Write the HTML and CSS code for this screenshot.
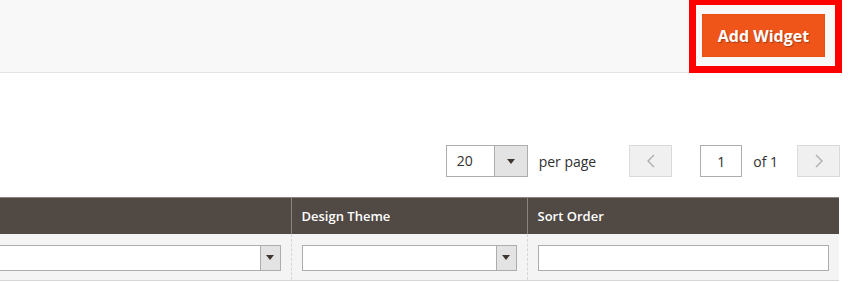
FILE: index.html
```html
<!DOCTYPE html>
<html lang="en">
<head>
  <meta charset="UTF-8">
  <title>Widgets</title>
  <link rel="stylesheet" href="styles.css">
</head>
<body>
  <!-- Page actions -->
  <div class="page-actions">
    <button class="btn-primary" type="button">Add Widget</button>
  </div>
  <div class="highlight"></div>

  <div class="grid-wrap">
    <!-- Pager -->
    <div class="pager">
      <div class="limit">
        <span class="limit-value">20</span>
        <span class="limit-arrow"><span class="caret"></span></span>
      </div>
      <span class="pager-label">per page</span>
      <button class="pager-btn prev" type="button">
        <svg width="8" height="14" viewBox="0 0 8 14"><polyline points="7,1 1,7 7,13" fill="none" stroke="#adadad" stroke-width="1.4"/></svg>
      </button>
      <input class="page-input" type="text" value="1">
      <span class="pager-total">of 1</span>
      <button class="pager-btn next" type="button">
        <svg width="8" height="14" viewBox="0 0 8 14"><polyline points="1,1 7,7 1,13" fill="none" stroke="#adadad" stroke-width="1.4"/></svg>
      </button>
    </div>

    <!-- Grid -->
    <table class="data-grid">
      <tr>
        <th class="col-title"></th>
        <th class="col-theme">Design Theme</th>
        <th class="col-sort">Sort Order</th>
      </tr>
      <tr class="filters">
        <td>
          <div class="select"><span class="select-arrow"><span class="caret"></span></span></div>
        </td>
        <td>
          <div class="select"><span class="select-arrow"><span class="caret"></span></span></div>
        </td>
        <td>
          <input class="text-filter" type="text">
        </td>
      </tr>
    </table>
  </div>
</body>
</html>
```

FILE: styles.css
```css
body {
  margin: 0;
  font-family: "Open Sans", Arial, sans-serif;
  color: #303030;
  background: #fff;
  overflow: hidden;
}
.page-actions {
  width: 835px;
  height: 72px;
  background: #f8f8f8;
  border-bottom: 1px solid #e3e3e3;
  display: flex;
  justify-content: flex-end;
  align-items: flex-start;
}
.btn-primary {
  margin: 14px 10px 0 0;
  width: 123px;
  height: 43px;
  background: #ef5419;
  border: 1px solid #ea5010;
  color: #fff;
  font-family: "Open Sans", Arial, sans-serif;
  font-size: 16px;
  font-weight: 700;
  text-shadow: 1px 1px 1px rgba(0, 0, 0, 0.3);
  padding: 0;
}
.highlight {
  position: absolute;
  left: 689px;
  top: -2px;
  width: 139px;
  height: 61px;
  border: 7px solid #ff0000;
}
.grid-wrap {
  margin-left: -200px;
  width: 1039px;
}
.pager {
  display: flex;
  justify-content: flex-end;
  align-items: center;
  height: 32px;
  margin-top: 72px;
  margin-right: -1px;
}
.limit {
  display: flex;
  width: 82px;
  height: 32px;
  border: 1px solid #adadad;
  box-sizing: border-box;
}
.limit-value {
  flex: 1;
  font-size: 14px;
  line-height: 30px;
  padding-left: 10px;
  background: #fff;
}
.limit-arrow {
  width: 32px;
  background: #e3e3e3;
  border-left: 1px solid #adadad;
  display: flex;
  align-items: center;
  justify-content: center;
}
.caret {
  width: 0;
  height: 0;
  border-left: 4px solid transparent;
  border-right: 4px solid transparent;
  border-top: 5px solid #41362f;
}
.pager-label {
  font-size: 14px;
  margin-left: 11px;
  margin-right: 33px;
}
.pager-btn {
  width: 43px;
  height: 32px;
  background: #f0f0f0;
  border: 1px solid #dadada;
  padding: 0;
  display: flex;
  align-items: center;
  justify-content: center;
}
.page-input {
  margin-left: 28px;
  width: 42px;
  height: 32px;
  box-sizing: border-box;
  border: 1px solid #adadad;
  text-align: center;
  font-family: "Open Sans", Arial, sans-serif;
  font-size: 14px;
  color: #303030;
}
.pager-total {
  font-size: 14px;
  margin-left: 11px;
  margin-right: 19px;
}
.data-grid {
  margin-top: 20px;
  width: 1039px;
  border-collapse: collapse;
  table-layout: fixed;
}
.data-grid th {
  height: 36px;
  background: #514943;
  color: #fff;
  font-size: 13px;
  font-weight: 600;
  text-align: left;
  padding: 0 10px;
  border-left: 1px solid #8a837f;
  border-top: 1px solid #8a837f;
  box-sizing: border-box;
}
.data-grid th:first-child {
  border-left: none;
}
.col-title { width: 491px; }
.col-theme { width: 236px; }
.col-sort { width: 312px; }
.filters td {
  background: #f4f4f4;
  padding: 11px 10px 9px 10px;
  border-left: 1px dashed #d6d6d6;
  border-bottom: 1px solid #d6d6d6;
}
.filters td:first-child {
  border-left: none;
}
.select {
  height: 26px;
  border: 1px solid #adadad;
  background: #fff;
  display: flex;
  justify-content: flex-end;
  box-sizing: border-box;
}
.select-arrow {
  width: 19px;
  background: #e3e3e3;
  border-left: 1px solid #adadad;
  display: flex;
  align-items: center;
  justify-content: center;
}
.text-filter {
  display: block;
  width: 100%;
  height: 26px;
  box-sizing: border-box;
  border: 1px solid #adadad;
  margin: 0;
}
```
